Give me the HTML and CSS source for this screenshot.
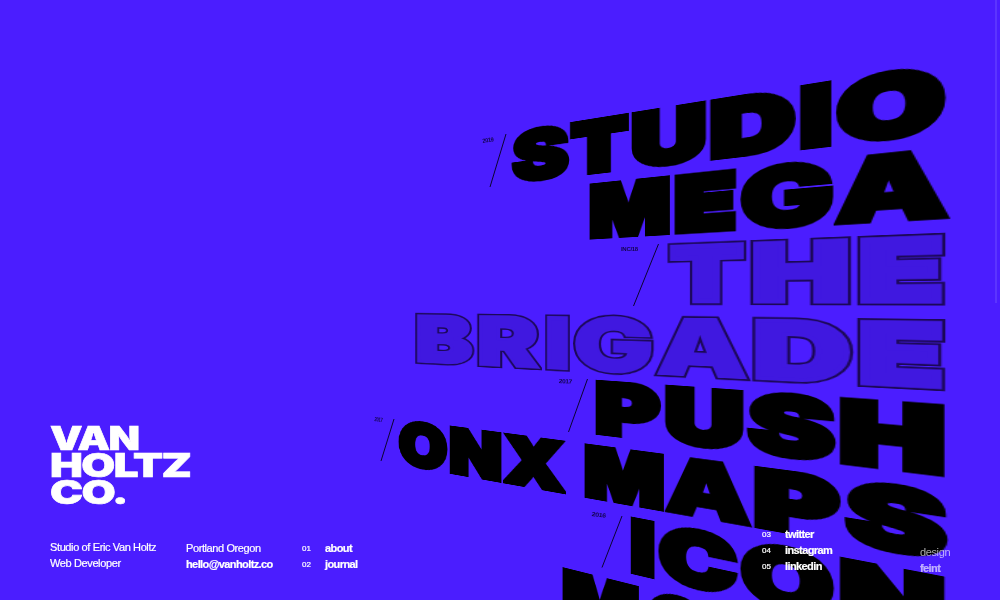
FILE: index.html
```html
<!DOCTYPE html>
<html lang="en">
<head>
<meta charset="utf-8">
<title>Van Holtz Co.</title>
<link rel="stylesheet" href="styles.css">
</head>
<body>
<main class="page">
  <section class="projects" id="projects"></section>
  <div class="scrollbar"></div>
  <div class="intro">
    <h1 class="logo"><span class="logo-line van">VAN</span><span class="logo-line holtz">HOLTZ</span><span class="logo-line co">CO.</span></h1>
    <footer class="footer">
      <p class="col about"><span>Studio of Eric Van Holtz</span><span>Web Developer</span></p>
      <p class="col place"><span>Portland Oregon</span><b>hello@vanholtz.co</b></p>
      <nav class="col nav">
        <a><i>01</i><b>about</b></a>
        <a><i>02</i><b>journal</b></a>
      </nav>
      <nav class="col nav social">
        <a><i>03</i><b>twitter</b></a>
        <a><i>04</i><b>instagram</b></a>
        <a><i>05</i><b>linkedin</b></a>
      </nav>
      <p class="col credit"><span>design</span><b>feint</b></p>
    </footer>
  </div>
</main>
<script src="projects.js"></script>
</body>
</html>
```
FILE: styles.css
```css
* { box-sizing: border-box; }
body {
  margin: 0;
  background: #4b1dff;
  color: #fff;
  font-family: "Liberation Sans", Arial, sans-serif;
  overflow: hidden;
}
.page {
  position: relative;
  width: 1000px;
  height: 600px;
  overflow: hidden;
  display: flex;
  flex-direction: column;
  justify-content: flex-end;
}
.projects { position: absolute; inset: 0; overflow: hidden; }
.glyph {
  position: absolute;
  left: 0;
  top: 0;
  font: 900 100px/100px Inter, sans-serif;
  color: #000;
  -webkit-text-stroke: var(--weight) #000;
  transform-origin: 0 0;
  white-space: pre;
}
.outlined .glyph { color: #4018e0; -webkit-text-stroke: calc(var(--weight) - 3.6px) #4018e0; }
.outlined .glyph::before {
  content: attr(data-letter);
  position: absolute;
  left: 0;
  top: 0;
  z-index: -1;
  color: #1c0858;
  -webkit-text-stroke: calc(var(--weight) + 0.8px) #1c0858;
}
.slashes { position: absolute; left: 0; top: 0; }
.slashes line { stroke: #0c0430; stroke-width: 1; }
.year {
  position: absolute;
  font: bold 6px/6px "Liberation Sans", sans-serif;
  letter-spacing: -0.3px;
  color: #140550;
  transform-origin: 0 0;
}
.scrollbar {
  position: absolute;
  right: 3px;
  top: 0;
  width: 2px;
  height: 303px;
  background: #5c34ff;
}
.intro { position: relative; padding: 0 50px 28px; }
.logo {
  margin: 0 0 20.5px;
  font: 900 32.5px/27px Inter, sans-serif;
  letter-spacing: -1.2px;
  -webkit-text-stroke: 0.6px #fff;
}
.logo-line { display: block; transform-origin: 0 0; width: max-content; }
.van { transform: scaleX(1.26); }
.holtz { transform: scaleX(1.35); }
.co { transform: scaleX(1.36); }
.footer { display: flex; align-items: flex-end; font-size: 11px; line-height: 16px; letter-spacing: -0.38px; }
.footer b { letter-spacing: -0.6px; -webkit-text-stroke: 0.2px #fff; }
.col { margin: 0; display: flex; flex-direction: column; flex: none; }
.about { width: 136px; margin-bottom: 1px; -webkit-text-stroke: 0.2px #fff; }
.place { width: 116px; letter-spacing: -0.4px; -webkit-text-stroke: 0.2px #fff; }
.nav { width: 460px; }
.nav a { display: flex; }
.nav i { width: 23px; font-style: normal; font-size: 8px; letter-spacing: 0; padding-top: 1px; height: 16px; -webkit-text-stroke: 0.2px #fff; }
.social { width: 158px; margin-bottom: -2px; }
.credit { opacity: .65; margin-bottom: -4px; }
```
FILE: projects.js
```js
// Each row lies between two converging lines: [x, y, slope] for cap height and baseline.
const rows = [
  { top: [570, 122.5, -0.160], base: [587, 175.5, -0.116],
    letters: [['S', 511, 569.5], ['T', 569.5, 629], ['U', 631, 706.5], ['D', 709.5, 796], ['I', 799.5, 832], ['O', 835.5, 947]] },
  { top: [589, 184, -0.1037], base: [589, 240, -0.0573],
    letters: [['M', 589, 670], ['E', 674, 737], ['G', 740, 833.5], ['A', 834, 950]] },
  { outlined: true, top: [667.3, 244, -0.0377], base: [667.3, 305, 0.002],
    letters: [['T', 667.3, 746], ['H', 750, 851.5], ['E', 857, 946]] },
  { outlined: true, top: [415, 313.5, 0.0122], base: [415, 363.8, 0.052],
    letters: [['B', 415, 474.5], ['R', 477, 541.5], ['I', 545, 570], ['G', 573, 653.5], ['A', 655, 750], ['D', 752, 853], ['E', 857, 946]] },
  { top: [595, 380, 0.0705], base: [595, 435, 0.122],
    letters: [['P', 595, 662], ['U', 664.5, 744], ['S', 746, 836], ['H', 839, 945.5]] },
  { top: [449.3, 425.7, 0.1325], base: [449.3, 474, 0.178],
    letters: [['O', 398.3, 448], ['N', 449.3, 502], ['X', 503, 566], [' '], ['M', 584, 664], ['A', 665, 752], ['P', 753.5, 842], ['S', 843.5, 948]] },
  { top: [630.3, 516.7, 0.192], base: [630.3, 574, 0.235],
    letters: [['I', 630.3, 655], ['C', 658, 738], ['O', 740, 835], ['N', 839, 945.5]] },
  { top: [562, 567.3, 0.25], base: [562, 625, 0.29],
    letters: [['M', 562, 639], ['O', 645, 712]] }
];
// Extra stroke that brings each letter to the display weight.
const weights = { S: 7, G: 6, A: 5.5, O: 7, C: 7, B: 8, R: 7, P: 8, D: 8, U: 8, M: 8, N: 8, X: 8, E: 11, H: 9, T: 10, I: 10 };
const years = [['2019', 482, 138, -9, 11], ['INC/18', 621, 246, 0, 17], ['2017', 559, 377.5, 3, 13], ['2017', 375, 416, 8, 8], ['2016', 592, 510.5, 7, 14]];
const slashes = [[506, 134, 490, 187], [658.5, 244, 633.5, 306], [587.5, 379, 568.5, 432], [394, 419, 381, 461], [622, 516, 602, 567.5]];

const host = document.getElementById('projects');
const ctx = document.createElement('canvas').getContext('2d');
const at = (line, x) => line[1] + line[2] * (x - line[0]);

// matrix3d taking the rectangle x0..x1, y0..y1 to a quad with vertical sides.
function warp(x0, x1, y0, y1, q) {
  const [ax, ay, bx, by, cx, cy, dx, dy] = q;
  const sx = ax - bx + cx - dx, sy = ay - by + cy - dy;
  const ux = bx - cx, uy = by - cy, vx = dx - cx, vy = dy - cy;
  const det = ux * vy - uy * vx;
  const g = (sx * vy - sy * vx) / det, h = (ux * sy - uy * sx) / det;
  const m = new DOMMatrix([
    bx - ax + g * bx, by - ay + g * by, 0, g,
    dx - ax + h * dx, dy - ay + h * dy, 0, h,
    0, 0, 1, 0, ax, ay, 0, 1]);
  return m.scale(1 / (x1 - x0), 1 / (y1 - y0), 1).translate(-x0, -y0);
}

for (const row of rows) {
  const word = document.createElement('div');
  if (row.outlined) word.className = 'outlined';
  for (const [ch, l, r] of row.letters) {
    if (ch === ' ') { word.append(' '); continue; }
    const pad = weights[ch] / 2;
    ctx.font = '900 100px Inter';
    const m = ctx.measureText(ch), cap = ctx.measureText('H').actualBoundingBoxAscent;
    const baseline = 50 + (m.fontBoundingBoxAscent - m.fontBoundingBoxDescent) / 2;
    const el = document.createElement('span');
    el.className = 'glyph';
    el.textContent = ch;
    el.dataset.letter = ch;
    el.style.setProperty('--weight', weights[ch] + 'px');
    el.style.transform = warp(-m.actualBoundingBoxLeft - pad, m.actualBoundingBoxRight + pad,
      baseline - cap - pad, baseline + pad,
      [l, at(row.top, l), r, at(row.top, r), r, at(row.base, r), l, at(row.base, l)]).toString();
    word.append(el);
  }
  host.append(word);
}

host.insertAdjacentHTML('beforeend', '<svg class="slashes" width="1000" height="600">' +
  slashes.map(([a, b, c, d]) => `<line x1="${a}" y1="${b}" x2="${c}" y2="${d}"/>`).join('') + '</svg>');
for (const [text, x, y, deg, width] of years) {
  const el = document.createElement('span');
  el.className = 'year';
  el.textContent = text;
  el.style.left = x + 'px';
  el.style.top = y + 'px';
  host.append(el);
  el.style.transform = `rotate(${deg}deg) scaleX(${width / el.offsetWidth})`;
}
```
